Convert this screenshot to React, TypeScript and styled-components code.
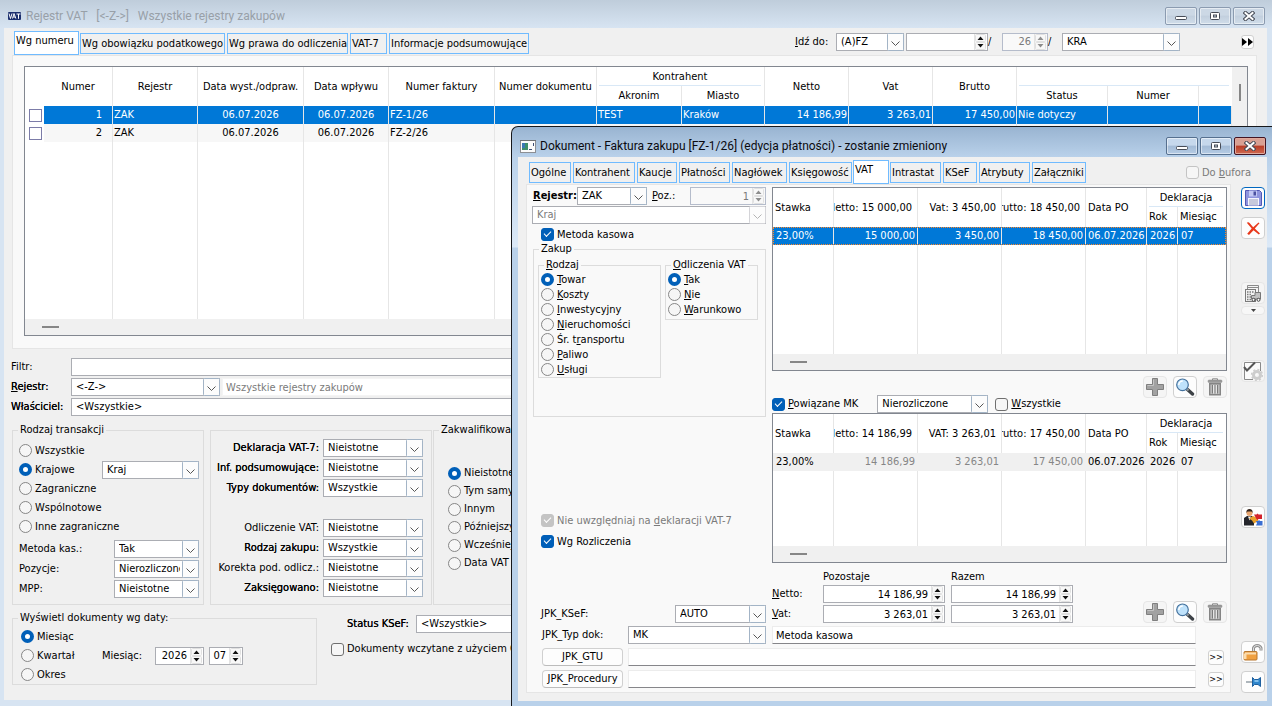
import React, { useId } from "react";
import styled, { createGlobalStyle, css } from "styled-components";

const uiFont = `"DejaVu Sans Condensed", "Noto Sans", "DejaVu Sans", sans-serif`;
const titleFont = `Roboto, "Noto Sans", sans-serif`;

const c = {
  face: "#f0f0f0",
  page: "#f9f9f9",
  line: "#dcdcdc",
  field: "#abadb3",
  list: "#828790",
  select: "#0078d7",
  accent: "#005fb8",
  tab: "#70bbff",
  muted: "#7a7a7a",
};

const GlobalStyle = createGlobalStyle`
  *, *::before, *::after { box-sizing: border-box; }
  body { margin: 0; background: #d7e4f2; overflow: hidden; }
  body, button, input, select { font: 11px/14px ${uiFont}; color: #000; }
  button, input, select { margin: 0; }
`;

/* ---------- windows ---------- */

const Desktop = styled.div`
  position: relative;
  display: flex;
  flex-direction: column;
  min-height: 100vh;
  padding-bottom: 6px;
  background: #d7e4f2;
  overflow: hidden;
`;

const MainBody = styled.main`
  flex: 1;
  margin: 0 5px 0 4px;
  padding-bottom: 15px;
  background: ${c.face};
`;

const Dialog = styled.section`
  position: absolute;
  top: 126px;
  left: 511px;
  right: 0;
  bottom: 0;
  display: flex;
  flex-direction: column;
  padding: 0 5px 5px 6px;
  border: solid #16181c;
  border-width: 1px 0 0 1px;
  border-radius: 7px 0 0 0;
  background: linear-gradient(#99b4d1 0, #b9d1ea 30px, #dce9f7 120px, #b9d1ea 121px);
`;

const TitleBar = styled.header<{ $dialog?: boolean }>`
  display: flex;
  align-items: center;
  gap: ${(p) => (p.$dialog ? 4 : 5)}px;
  height: ${(p) => (p.$dialog ? 30 : 28)}px;
  padding: ${(p) => (p.$dialog ? "8px 1px 0 2px" : "4px 7px 0 8px")};
  background: ${(p) => (p.$dialog ? "none" : "linear-gradient(#bfcddb, #d7e4f2)")};
`;

const Title = styled.h1<{ $dialog?: boolean }>`
  flex: 1;
  margin: 0;
  font: 400 12px/16px ${titleFont};
  color: ${(p) => (p.$dialog ? "#0b0b10" : "#98a0a8")};
  white-space: pre;
`;

const CaptionButtons = styled.div`
  display: flex;
  gap: 2px;
`;

const CaptionButton = styled.button<{ $tone: "plain" | "strong" | "close" }>`
  display: grid;
  place-items: center;
  width: 32px;
  height: 18px;
  padding: 0;
  border: 1px solid ${(p) => (p.$tone === "close" ? "#431422" : p.$tone === "strong" ? "#56708f" : "#8b9bb0")};
  border-radius: 2px;
  box-shadow: inset 0 0 0 1px ${(p) => (p.$tone === "close" ? "#e0a99c" : "#ffffff80")};
  background: ${(p) =>
    p.$tone === "close"
      ? "linear-gradient(#d9a093 45%, #b83c26 50%, #cf6a52)"
      : p.$tone === "strong"
      ? "linear-gradient(#c6d8ec 45%, #a3bbd6 50%, #b6cce5)"
      : "linear-gradient(#ccd8e5 45%, #c2cfde 50%, #d0ddea)"};
`;

const DialogBody = styled.div`
  flex: 1;
  display: flex;
  flex-direction: column;
  padding: 0 0 8px 8px;
  background: ${c.face};
`;

/* ---------- tabs ---------- */

const TabRow = styled.div<{ $main?: boolean }>`
  display: flex;
  align-items: flex-end;
  height: 27px;
  padding: ${(p) => (p.$main ? "0 13px 0 11px" : "0 16px 0 3px")};
`;

const Tabs = styled.div`
  display: flex;
  align-items: flex-end;
  gap: 2px;
`;

const Tab = styled.button<{ $w: number; $active?: boolean }>`
  width: ${(p) => p.$w}px;
  height: ${(p) => (p.$active ? 24 : 21)}px;
  margin: ${(p) => (p.$active ? "0 -1px" : "0 0 1px")};
  padding: 0 0 ${(p) => (p.$active ? 4 : 0)}px 1px;
  border: 1px solid ${c.tab};
  background: ${(p) => (p.$active ? "#fff" : c.face)};
  text-align: left;
  white-space: nowrap;
`;

/* ---------- fields ---------- */

const SelectBox = styled.span<{ $w?: number; $off?: boolean }>`
  position: relative;
  display: flex;
  flex: ${(p) => (p.$w ? "none" : "1")};
  width: ${(p) => (p.$w ? p.$w + "px" : "auto")};
  height: 18px;
  select {
    appearance: none;
    flex: 1;
    min-width: 0;
    padding: 0 18px 0 4px;
    border: 1px solid ${c.field};
    border-radius: 0;
    background: #fff;
    color: ${(p) => (p.$off ? c.muted : "#000")};
    opacity: 1;
  }
  svg {
    position: absolute;
    top: 0;
    right: 0;
    pointer-events: none;
  }
`;

const SpinBox = styled.span<{ $w: number; $off?: boolean }>`
  display: flex;
  align-items: center;
  width: ${(p) => p.$w}px;
  height: 18px;
  padding-right: 1px;
  border: 1px solid ${(p) => (p.$off ? "#b5bccb" : c.field)};
  background: ${(p) => (p.$off ? c.page : "#fff")};
  input {
    flex: 1;
    min-width: 0;
    height: 16px;
    padding: 0 3px;
    border: 0;
    border-right: 1px solid #e3e3e3;
    background: none;
    text-align: right;
    color: ${(p) => (p.$off ? c.muted : "#000")};
  }
`;

const TextInput = styled.input<{ $quiet?: boolean }>`
  flex: 1;
  min-width: 0;
  height: 18px;
  padding: 0 4px;
  border: 1px solid ${(p) => (p.$quiet ? "#ececec" : c.field)};
  border-bottom-color: ${(p) => (p.$quiet ? "#86868a" : c.field)};
  background: #fff;
`;

const TypeName = styled(TextInput)`
  grid-column: 3;
  margin: 0 12px 0 6px;
  padding: 0 3px;
`;

const WideInput = styled(TextInput)`
  grid-column: 2 / 4;
  margin-right: 12px;
`;

const RegisterName = styled(TextInput)`
  padding: 0 3px;
  border-color: #f4f4f4;
  color: ${c.muted};
`;

const Choice = styled.label<{ $h?: number; $off?: boolean }>`
  display: flex;
  align-items: center;
  gap: 3px;
  height: ${(p) => p.$h ?? 15}px;
  white-space: nowrap;
  color: ${(p) => (p.$off ? c.muted : "#000")};
`;

const mark = css`
  appearance: none;
  flex: none;
  width: 13px;
  height: 13px;
  background: #f6f6f6;
  border: 1px solid #868686;
`;

const RadioMark = styled.input`
  ${mark}
  border-radius: 50%;
  &:checked {
    border: 4px solid ${c.accent};
    background: #fff;
  }
`;

const CheckMark = styled.input`
  ${mark}
  display: grid;
  place-items: center;
  border-radius: 3px;
  border-color: #6f6f6f;
  &:checked {
    border-color: ${c.accent};
    background: ${c.accent};
  }
  &:disabled {
    border-color: #c4c4c4;
  }
  &:checked:disabled {
    background: #c4c4c4;
  }
  &:checked::after {
    content: "";
    width: 7px;
    height: 4px;
    margin-bottom: 3px;
    border: solid #fff;
    border-width: 0 0 1px 1px;
    transform: rotate(-45deg);
  }
`;

const RowMark = styled.input`
  ${mark}
  display: block;
  margin: 0 0 0 4px;
  border-color: #7c7ca8;
  background: #fff;
`;

const Caption = styled.label<{ $heavy?: boolean; $bold?: boolean; $w?: number; $right?: boolean }>`
  flex: none;
  width: ${(p) => (p.$w ? p.$w + "px" : "auto")};
  white-space: nowrap;
  text-align: ${(p) => (p.$right ? "right" : "left")};
  font-weight: ${(p) => (p.$bold ? 700 : 400)};
  text-shadow: ${(p) => (p.$heavy ? "0 0 0 #000" : "none")};
`;

const Group = styled.fieldset<{ $w?: number }>`
  flex: ${(p) => (p.$w ? "none" : "1")};
  width: ${(p) => (p.$w ? p.$w + "px" : "auto")};
  min-width: 0;
  margin: 0;
  padding: 0;
  border: 1px solid ${c.line};
  legend {
    margin-left: 5px;
    padding: 0 2px;
    white-space: nowrap;
  }
`;

const Stack = styled.div<{ $pad?: string; $gap?: number }>`
  display: flex;
  flex-direction: column;
  gap: ${(p) => p.$gap ?? 0}px;
  padding: ${(p) => p.$pad ?? "0"};
`;

const Line = styled.div<{ $h?: number; $between?: boolean; $gap?: number }>`
  display: flex;
  align-items: center;
  justify-content: ${(p) => (p.$between ? "space-between" : "flex-start")};
  gap: ${(p) => p.$gap ?? 0}px;
  height: ${(p) => p.$h ?? 18}px;
`;

const Gap = styled.span<{ $w: number }>`
  flex: none;
  width: ${(p) => p.$w}px;
`;

/* ---------- lists ---------- */

const MainPage = styled.div`
  margin: 0 10px 0 8px;
  padding: 10px 8px 12px 11px;
  border: 1px solid #e5e5e5;
  background: ${c.page};
`;

const ListFrame = styled.div`
  display: grid;
  grid-template-columns: minmax(0, 1fr) auto;
  border: 1px solid ${c.list};
  background: #fff;
`;

const VerticalBar = styled.div`
  width: 15px;
  padding: 17px 5px 0 7px;
  background: ${c.face};
  &::before {
    content: "";
    display: block;
    width: 2px;
    height: 17px;
    background: #868686;
  }
`;

const HorizontalBar = styled.div`
  grid-column: 1 / -1;
  height: 16px;
  padding: 7px 0 0 17px;
  background: ${c.face};
  &::before {
    content: "";
    display: block;
    width: 17px;
    height: 2px;
    background: #868686;
  }
`;

const DataTable = styled.table`
  width: 100%;
  table-layout: fixed;
  border-collapse: separate;
  border-spacing: 0;
  th,
  td {
    padding: 0;
    border-right: 1px solid #e6e6e6;
    font-weight: 400;
    white-space: nowrap;
    overflow: hidden;
  }
  th.bare,
  td.bare {
    border-right: 0;
  }
`;

const HeadRow = styled.tr<{ $h: number }>`
  height: ${(p) => p.$h}px;
`;

const GroupTitle = styled.div`
  height: 19px;
  margin: 0 3px 0 2px;
  padding-top: 3px;
  border-bottom: 1px solid #d9e8f6;
`;

const HeadClip = styled.div<{ $right?: boolean }>`
  display: flex;
  justify-content: ${(p) => (p.$right ? "flex-end" : "flex-start")};
  padding: ${(p) => (p.$right ? "0 5px 0 0" : "0 0 0 2px")};
  overflow: hidden;
  span {
    flex: none;
  }
`;

const BodyRow = styled.tr<{ $tone?: "selected" | "alt" | "grey"; $dotted?: boolean }>`
  height: 18px;
  color: ${(p) => (p.$tone === "selected" ? "#fff" : "#000")};
  outline: ${(p) => (p.$dotted ? "1px dotted #ff8728" : "none")};
  outline-offset: -1px;
  td {
    background: ${(p) =>
      p.$tone === "selected" ? c.select : p.$tone === "alt" ? "#f7f7f7" : p.$tone === "grey" ? "#f0f0f0" : "#fff"};
    border-right-color: ${(p) => (p.$tone === "grey" ? "#f0f0f0" : "#e6e6e6")};
  }
  td.bare {
    background: ${(p) => (p.$dotted ? c.select : p.$tone === "grey" ? "#f0f0f0" : "#fff")};
  }
`;

const Cell = styled.td<{ $align?: "left" | "right" | "center"; $inset?: number; $lead?: number; $dim?: boolean }>`
  && {
    padding: 0 ${(p) => p.$inset ?? 2}px 0 ${(p) => p.$lead ?? 1}px;
    text-align: ${(p) => p.$align ?? "left"};
    color: ${(p) => (p.$dim ? "#868686" : "inherit")};
  }
`;

const Filler = styled.tr<{ $h: number }>`
  height: ${(p) => p.$h}px;
`;

/* ---------- main window filters ---------- */

const GoTo = styled.div`
  display: flex;
  align-items: center;
  height: 24px;
  margin-left: auto;
  padding-bottom: 3px;
`;

const SkipButton = styled.button`
  display: grid;
  place-items: center;
  width: 13px;
  height: 14px;
  padding: 0;
  border: 1px solid #d0d0d0;
  border-radius: 3px;
  background: #fdfdfd;
`;

const FilterGrid = styled.div`
  display: grid;
  grid-template-columns: 60px minmax(0, 1fr);
  align-items: center;
  row-gap: 2px;
  margin: 9px 10px 0 7px;
`;

const GroupsRow = styled.div`
  display: flex;
  margin: 7px 10px 0 8px;
`;

const MatchGroup = styled(Group)`
  margin: 7px 1px 0 6px;
`;

const MatchGrid = styled.div`
  display: grid;
  grid-template-columns: 1fr 100px;
  grid-auto-rows: 20px;
  align-items: center;
  column-gap: 4px;
  padding: 7px 8px 0 0;
`;

const BlankRow = styled.span`
  grid-column: 1 / -1;
`;

const DateRow = styled.div`
  display: flex;
  margin: 6px 10px 0 8px;
`;

const DateBody = styled.div`
  display: flex;
  align-items: center;
  padding: 2px 0 0 8px;
`;

const DateKinds = styled.div`
  width: 81px;
`;

const KsefBlock = styled.div`
  flex: 1;
  display: flex;
  flex-direction: column;
  gap: 7px;
  padding: 4px 0 0 14px;
`;

/* ---------- dialog layout ---------- */

const BufferCheck = styled.div`
  height: 19px;
  margin-left: auto;
`;

const DialogContent = styled.div`
  flex: 1;
  display: flex;
  gap: 10px;
  padding-right: 2px;
`;

const VatPage = styled.div`
  flex: 1;
  min-width: 0;
  padding: 2px 3px 4px 5px;
  border: 1px solid #e5e5e5;
  background: ${c.page};
`;

const Columns = styled.div`
  display: grid;
  grid-template-columns: 234px minmax(0, 1fr);
  column-gap: 6px;
`;

const LeftColumn = styled.div`
  display: flex;
  flex-direction: column;
`;

const RegisterLine = styled(Line)`
  margin-bottom: 1px;
  padding-left: 1px;
`;

const CashLine = styled.div`
  padding: 3px 0 0 9px;
`;

const PurchaseGroup = styled(Group)`
  flex: none;
  height: 175px;
  margin-left: 1px;
`;

const PurchaseBody = styled.div`
  display: flex;
  align-items: flex-start;
  gap: 4px;
  padding: 2px 0 0 4px;
`;

const SettleChecks = styled.div`
  display: grid;
  gap: 6px;
  margin-top: 96px;
  padding-left: 9px;
`;

const KsefLine = styled(Line)`
  margin-top: auto;
  padding-left: 9px;
`;

const RelatedBar = styled.div`
  display: flex;
  align-items: flex-end;
  height: 42px;
`;

const Tools = styled.div<{ $top?: boolean }>`
  display: flex;
  gap: 6px;
  align-self: ${(p) => (p.$top ? "flex-start" : "flex-end")};
  margin: ${(p) => (p.$top ? 5 : 0)}px 0 0 auto;
`;

const IconButton = styled.button<{ $focus?: boolean; $flat?: boolean }>`
  display: grid;
  place-items: center;
  width: 24px;
  height: 22px;
  padding: 0;
  border: 1px solid ${(p) => (p.$focus ? "#0067c0" : p.$flat ? "#e6e6e6" : "#d0d0d0")};
  border-radius: 4px;
  background: ${(p) => (p.$flat ? "#f5f5f5" : "#fdfdfd")};
`;

const Totals = styled.div`
  display: flex;
  padding-top: 7px;
`;

const TotalsGrid = styled.div`
  display: grid;
  grid-template-columns: 45px 122px 122px;
  grid-template-rows: 13px 18px 18px;
  align-items: center;
  column-gap: 6px;
  row-gap: 2px;
`;

const JpkRows = styled.div`
  display: grid;
  grid-template-columns: 86px 138px minmax(0, 1fr) 16px;
  gap: 4px 0;
  align-items: center;
  margin-top: 3px;
  padding: 0 3px 0 10px;
`;

const PushButton = styled.button`
  width: 81px;
  height: 18px;
  padding: 0;
  border: 1px solid #d0d0d0;
  border-bottom-color: #bcbcbc;
  border-radius: 4px;
  background: #fdfdfd;
  white-space: nowrap;
`;

const MoreButton = styled.button`
  display: flex;
  align-items: center;
  justify-content: center;
  width: 16px;
  height: 15px;
  padding: 0;
  border: 1px solid #d0d0d0;
  border-radius: 3px;
  background: #fdfdfd;
  font-size: 9px;
`;

const SideTools = styled.div`
  display: flex;
  flex-direction: column;
  width: 24px;
  padding-top: 3px;
`;

const SideSlot = styled.div<{ $top: number | "auto" }>`
  display: flex;
  margin-top: ${(p) => (p.$top === "auto" ? "auto" : p.$top + "px")};
`;

const DropButton = styled.button`
  display: grid;
  place-items: center;
  width: 24px;
  height: 9px;
  padding: 0;
  border: 1px solid #e6e6e6;
  border-radius: 4px;
  background: #f7f7f7;
`;

/* ---------- icons ---------- */

const VatLogo = () => (
  <svg width="13" height="10" viewBox="0 0 13 10" aria-hidden>
    <rect y="1" width="13" height="8" rx="1" fill="#1c2f6e" />
    <path d="M1 2.500l1.500 5L4 2.500M4.500 7.500L6 2.500l1.800 5M5.200 6h2M8.500 3H12.500M10.500 3v4.800" stroke="#fff" strokeWidth="1" fill="none" />
  </svg>
);

const DocIcon = () => (
  <svg width="16" height="13" viewBox="0 0 16 13" aria-hidden>
    <rect x=".5" y=".5" width="15" height="12" fill="#fbfbfb" stroke="#8c8f94" />
    <path d="M0 .5h16" stroke="#6f7276" strokeWidth="1" />
    <rect x="2" y="3" width="6" height="7" fill="#3f8f6b" />
    <rect x="2" y="3" width="3" height="5" fill="#3b79b5" />
    <path d="M9 9.500h3M13.500 3v3" stroke="#3c4d75" />
  </svg>
);

const MinGlyph = () => (
  <svg width="12" height="10" viewBox="0 0 12 10" aria-hidden>
    <rect x=".5" y="5.500" width="11" height="3" rx="1" fill="#fff" stroke="#474c57" />
  </svg>
);
const MaxGlyph = () => (
  <svg width="12" height="10" viewBox="0 0 12 10" aria-hidden>
    <rect x="1.500" y="1.500" width="9" height="7" rx="1" fill="#fff" stroke="#474c57" />
    <rect x="4.500" y="4" width="3" height="2" fill="#c6d3e2" stroke="#474c57" />
  </svg>
);
const CloseGlyph = () => (
  <svg width="12" height="10" viewBox="0 0 12 10" aria-hidden>
    <path d="M2.500 2l7 6M9.500 2l-7 6" stroke="#474c57" strokeWidth="4" strokeLinecap="square" />
    <path d="M2.500 2l7 6M9.500 2l-7 6" stroke="#fff" strokeWidth="2" strokeLinecap="square" />
  </svg>
);

const DropArrow = ({ off }: { off?: boolean }) => (
  <svg width="17" height="18" viewBox="0 0 17 18" aria-hidden>
    <rect x=".5" y=".5" width="16" height="17" rx="1" fill="#fcfcfc" stroke={off ? "#d4d4d8" : "#a3b4c6"} />
    <path d="M4.500 8.500l4 4 4-4" fill="none" stroke={off ? "#b4b4b4" : "#555"} />
  </svg>
);

const SpinArrows = ({ off }: { off?: boolean }) => (
  <svg width="11" height="16" viewBox="0 0 11 16" aria-hidden>
    <rect x=".5" y=".5" width="10" height="7" rx="1" fill="#f8f8f8" stroke="#e0e0e0" />
    <rect x=".5" y="8.500" width="10" height="7" rx="1" fill="#f8f8f8" stroke="#e0e0e0" />
    <path d="M2.500 6h6l-3-3.500zM2.500 10h6l-3 3.500z" fill={off ? "#8d8d8d" : "#111"} />
  </svg>
);

const SkipIcon = () => (
  <svg width="11" height="8" viewBox="0 0 11 8" aria-hidden>
    <path d="M0 0l5 4-5 4zM6 0l5 4-5 4z" fill="#000" />
  </svg>
);

const PlusIcon = () => (
  <svg width="18" height="18" viewBox="0 0 18 18" aria-hidden>
    <path d="M6.500 .5h5v6h6v5h-6v6h-5v-6h-6v-5h6z" fill="#a2a2a2" stroke="#7f7f7f" />
    <path d="M7.500 1.500v6h-6" stroke="#c4c4c4" fill="none" />
  </svg>
);

const LensIcon = () => (
  <svg width="20" height="18" viewBox="0 0 20 18" aria-hidden>
    <path d="M12.500 11.500l5 4.500" stroke="#3d4247" strokeWidth="3.400" strokeLinecap="round" />
    <path d="M11.500 10.500l2 2" stroke="#8f979e" strokeWidth="2" />
    <circle cx="7.500" cy="6.800" r="5.800" fill="#bfe2fb" stroke="#44719d" strokeWidth="1.200" />
    <path d="M3.800 7a4 4 0 0 1 4-4" stroke="#fff" strokeWidth="1.500" fill="none" />
  </svg>
);

const BinIcon = () => (
  <svg width="16" height="18" viewBox="0 0 16 18" aria-hidden>
    <path d="M5.500 2V.8h5V2" stroke="#8b8b8b" fill="none" />
    <rect x="1" y="2" width="14" height="2.500" rx="1" fill="#9a9a9a" stroke="#858585" strokeWidth=".5" />
    <path d="M2.700 5.700h10.600V16.800H2.700z" fill="#c2c2c2" stroke="#858585" strokeWidth="1.400" />
    <path d="M5.500 7v8.500M8 7v8.500M10.500 7v8.500" stroke="#7c7c7c" strokeWidth="1.200" />
    <path d="M6.700 7v8.500M9.300 7v8.500" stroke="#f0f0f0" strokeWidth="1" />
  </svg>
);

const SaveIcon = () => (
  <svg width="17" height="18" viewBox="0 0 17 18" aria-hidden>
    <path d="M.5 1.500h14l2 2v13H.5z" fill="#8f95de" stroke="#5358b4" />
    <rect x="4" y="1.500" width="8" height="6" fill="#c3c8f4" />
    <rect x="8.500" y="2.500" width="2.500" height="4" fill="#4a50a0" />
    <rect x="3" y="9" width="11" height="7.500" fill="#f4f5ff" />
    <path d="M4 11h9M4 13h9M4 15h9" stroke="#9a9db8" />
  </svg>
);

const DeleteIcon = () => (
  <svg width="15" height="15" viewBox="0 0 15 15" aria-hidden>
    <path d="M.8 1.800C1.800 .8 3 1.200 4 2.500L7.200 6.200 12.500 1.500 13.500 2.200 8.800 7.600 14 12.500 12.800 13.600 7.500 9.300 3 14 1.200 12.800 5.700 7.500z" fill="#e8381b" />
  </svg>
);

const StockIcon = () => (
  <svg width="16" height="17" viewBox="0 0 16 17" aria-hidden>
    <path d="M2.500 4.500V.5h11V8M2.500 2.500h11" stroke="#8b8b8b" fill="none" />
    <rect x=".5" y="4.500" width="10" height="12" fill="#f3f3f3" stroke="#7b7b7b" />
    <path d="M2 7h7M2 9.500h5M2 12h4M2 14.500h4" stroke="#7b7b7b" strokeWidth="1.300" strokeDasharray="1.500 1" />
    <path d="M10 7.500h5.500v6.500h-9v-3.500H10z" fill="#c2c2c2" stroke="#777" />
    <circle cx="8.500" cy="14.800" r="1.500" fill="#fff" stroke="#444" />
    <circle cx="13.500" cy="14.800" r="1.500" fill="#fff" stroke="#444" />
  </svg>
);

const VerifyIcon = () => (
  <svg width="20" height="20" viewBox="0 0 20 20" aria-hidden>
    <path d="M17.500 10V1.500H1.500v17H10" stroke="#8a8a8a" fill="#fbfbfb" />
    <path d="M1 6l3 3.500L12 1.500" stroke="#555" strokeWidth="2" fill="none" />
    <circle cx="14" cy="14" r="3.500" fill="none" stroke="#cdcdcd" strokeWidth="3" />
    <circle cx="14" cy="14" r="5.400" fill="none" stroke="#cdcdcd" strokeWidth="1.500" strokeDasharray="2 2.200" />
  </svg>
);

const MiniDrop = () => (
  <svg width="5" height="3" viewBox="0 0 5 3" aria-hidden>
    <path d="M0 0h5L2.500 3z" fill="#444" />
  </svg>
);

const PersonIcon = () => (
  <svg width="19" height="17" viewBox="0 0 19 17" aria-hidden>
    <path d="M0 16.500V9l3-2h5l2 2v7.500z" fill="#23242a" />
    <path d="M4 7.500l1.500 4L7 7.500z" fill="#f4f4f4" />
    <circle cx="5.500" cy="4" r="3" fill="#e9a56e" />
    <path d="M2.500 4C2 1 3.500 0 5.500 0s3.500 1 3 4L7.500 2.500h-4z" fill="#33241c" />
    <path d="M5 9.500l4-2.500 5 2v3l-4 2.500-2-3z" fill="#e9a02c" />
    <path d="M10 5.500h2.500l1-1 1 1H18v4.500h-3.500l-1 1-1-1z" fill="#d3222a" />
    <path d="M12 12h2l1-1 1 1h2.500v4.500H12l1-2.200z" fill="#3a6ed1" />
  </svg>
);

const LockIcon = () => (
  <svg width="20" height="18" viewBox="0 0 20 18" aria-hidden>
    <path d="M10.500 8.500V5a4 4 0 0 1 7.500 0v2.500" stroke="#8f8f8f" strokeWidth="3" fill="none" />
    <path d="M10.500 8.500V5a4 4 0 0 1 7.500 0v2.500" stroke="#dedede" strokeWidth="1" fill="none" />
    <rect x="1" y="8.500" width="13" height="8.500" rx="1" fill="#f0a040" stroke="#b8772f" />
    <path d="M2 10.500h11" stroke="#fbdcae" strokeWidth="2" />
    <path d="M2 10.500v5.500" stroke="#fbdcae" strokeWidth="3" />
  </svg>
);

const PinIcon = () => (
  <svg width="17" height="12" viewBox="0 0 17 12" aria-hidden>
    <path d="M1 6h7" stroke="#8c979f" strokeWidth="1.400" />
    <path d="M7.500 1.500l2 2h3.500l2.500-2v9l-2.500-2H9.500l-2 2z" fill="#2f86cc" stroke="#1e5f9e" />
    <path d="M9.500 5h4" stroke="#9bd0f7" strokeWidth="1.500" />
  </svg>
);

/* ---------- small composites ---------- */

/** Splits "Re&jestr" into text with its access key underlined. */
const Access = ({ text }: { text: string }) => {
  const at = text.indexOf("&");
  if (at < 0) return <span>{text}</span>;
  return (
    <span>
      {text.slice(0, at)}
      <u>{text[at + 1]}</u>
      {text.slice(at + 2)}
    </span>
  );
};

const Dropdown = ({ value, w, off, id, name }: { value: string; w?: number; off?: boolean; id?: string; name?: string }) => (
  <SelectBox $w={w} $off={off}>
    <select id={id} aria-label={id ? undefined : name} disabled={off} defaultValue={value}>
      <option>{value}</option>
    </select>
    <DropArrow off={off} />
  </SelectBox>
);

const Spin = ({ value, w, off, name, id }: { value: string; w: number; off?: boolean; name?: string; id?: string }) => (
  <SpinBox $w={w} $off={off}>
    <input id={id} aria-label={name} defaultValue={value} disabled={off} />
    <SpinArrows off={off} />
  </SpinBox>
);

const Radio = ({ text, group, on, h }: { text: string; group: string; on?: boolean; h?: number }) => (
  <Choice $h={h}>
    <RadioMark type="radio" name={group} defaultChecked={on} />
    <Access text={text} />
  </Choice>
);

const Check = ({ text, on, off, h }: { text: string; on?: boolean; off?: boolean; h?: number }) => (
  <Choice $h={h} $off={off}>
    <CheckMark type="checkbox" defaultChecked={on} disabled={off} />
    <Access text={text} />
  </Choice>
);

const LabeledSelect = ({ label, value, w }: { label: string; value: string; w: number }) => {
  const id = useId();
  return (
    <Line $h={20} $between>
      <Caption htmlFor={id}>{label}</Caption>
      <Dropdown id={id} value={value} w={w} />
    </Line>
  );
};

const Match = ({ label, value, heavy }: { label: string; value: string; heavy?: boolean }) => {
  const id = useId();
  return (
    <>
      <Caption htmlFor={id} $heavy={heavy} $right>
        {label}
      </Caption>
      <Dropdown id={id} value={value} w={100} />
    </>
  );
};

const WindowButtons = ({ dialog }: { dialog?: boolean }) => (
  <CaptionButtons>
    <CaptionButton $tone={dialog ? "strong" : "plain"} aria-label="Minimalizuj">
      <MinGlyph />
    </CaptionButton>
    <CaptionButton $tone={dialog ? "strong" : "plain"} aria-label="Maksymalizuj">
      <MaxGlyph />
    </CaptionButton>
    <CaptionButton $tone={dialog ? "close" : "plain"} aria-label="Zamknij">
      <CloseGlyph />
    </CaptionButton>
  </CaptionButtons>
);

const EditTools = ({ top }: { top?: boolean }) => (
  <Tools $top={top}>
    <IconButton $flat aria-label="Dodaj"><PlusIcon /></IconButton>
    <IconButton aria-label="Podgląd"><LensIcon /></IconButton>
    <IconButton $flat aria-label="Usuń"><BinIcon /></IconButton>
  </Tools>
);

/* ---------- register list ---------- */

const registerCols = [19, 69, 85, 106, 85, 106, 102, 85, 83, 84, 84, 84, 91, 91];
const registerRows = [
  ["1", "ZAK", "06.07.2026", "06.07.2026", "FZ-1/26", "", "TEST", "Kraków", "14 186,99", "3 263,01", "17 450,00", "Nie dotyczy", "", ""],
  ["2", "ZAK", "06.07.2026", "06.07.2026", "FZ-2/26", "", "", "", "", "", "", "", "", ""],
];
const registerAlign = ["right", "left", "center", "center", "left", "left", "left", "left", "right", "right", "right", "left", "left", "left"] as const;

const RegisterList = () => (
  <ListFrame>
    <DataTable>
      <colgroup>
        {registerCols.map((w, i) => (
          <col key={i} width={w} />
        ))}
        <col />
      </colgroup>
      <thead>
        <HeadRow $h={19}>
          <th rowSpan={2} className="bare" />
          {["Numer", "Rejestr", "Data wyst./odpraw.", "Data wpływu", "Numer faktury", "Numer dokumentu"].map((t) => (
            <th key={t} rowSpan={2}>{t}</th>
          ))}
          <th colSpan={2}><GroupTitle>Kontrahent</GroupTitle></th>
          {["Netto", "Vat", "Brutto"].map((t) => (
            <th key={t} rowSpan={2}>{t}</th>
          ))}
          <th colSpan={3} className="bare"><GroupTitle /></th>
        </HeadRow>
        <HeadRow $h={20}>
          <th>Akronim</th>
          <th>Miasto</th>
          <th>Status</th>
          <th>Numer</th>
          <th className="bare" />
        </HeadRow>
      </thead>
      <tbody>
        {registerRows.map((row, r) => (
          <BodyRow key={r} $tone={r === 0 ? "selected" : "alt"}>
            <td className="bare">
              <RowMark type="checkbox" aria-label={`Zaznacz pozycję ${row[0]}`} />
            </td>
            {row.map((v, i) => (
              <Cell key={i} $align={registerAlign[i]} $inset={i === 0 ? 10 : 1}>{v}</Cell>
            ))}
          </BodyRow>
        ))}
        <Filler $h={177}>
          <td className="bare" />
          {registerRows[0].map((_, i) => (
            <td key={i} className={i === 13 ? "bare" : undefined} />
          ))}
        </Filler>
      </tbody>
    </DataTable>
    <VerticalBar />
    <HorizontalBar />
  </ListFrame>
);

/* ---------- VAT lists in the dialog ---------- */

type VatListProps = {
  heads: [string, string, string];
  values: [string, string, string];
  selected?: boolean;
  rest: number;
};

const VatList = ({ heads, values, selected, rest }: VatListProps) => (
  <ListFrame>
    <DataTable>
      <colgroup>
        {[61, 84, 84, 84, 61, 31].map((w, i) => (
          <col key={i} width={w} />
        ))}
        <col />
      </colgroup>
      <thead>
        <HeadRow $h={19}>
          <th rowSpan={2}><HeadClip><span>Stawka</span></HeadClip></th>
          {heads.map((t) => (
            <th key={t} rowSpan={2}><HeadClip $right><span>{t}</span></HeadClip></th>
          ))}
          <th rowSpan={2}><HeadClip><span>Data PO</span></HeadClip></th>
          <th colSpan={2} className="bare"><GroupTitle>Deklaracja</GroupTitle></th>
        </HeadRow>
        <HeadRow $h={20}>
          <th><HeadClip><span>Rok</span></HeadClip></th>
          <th className="bare"><HeadClip><span>Miesiąc</span></HeadClip></th>
        </HeadRow>
      </thead>
      <tbody>
        <BodyRow $tone={selected ? "selected" : "grey"} $dotted={selected}>
          <Cell $lead={3}>23,00%</Cell>
          {values.map((v) => (
            <Cell key={v} $align="right" $dim={!selected}>{v}</Cell>
          ))}
          <Cell $lead={2} $inset={0}>06.07.2026</Cell>
          <Cell $lead={3} $inset={0}>2026</Cell>
          <Cell $lead={3} className="bare">07</Cell>
        </BodyRow>
        <Filler $h={rest}>
          {[0, 1, 2, 3, 4, 5].map((i) => (
            <td key={i} />
          ))}
          <td className="bare" />
        </Filler>
      </tbody>
    </DataTable>
    <HorizontalBar />
  </ListFrame>
);

/* ---------- dialog ---------- */

const dialogTabs: [string, number][] = [
  ["Ogólne", 42], ["Kontrahent", 62], ["Kaucje", 40], ["Płatności", 51], ["Nagłówek", 55], ["Księgowość", 63],
  ["VAT", 36], ["Intrastat", 51], ["KSeF", 34], ["Atrybuty", 51], ["Załączniki", 54],
];

const DocumentDialog = () => (
  <Dialog role="dialog" aria-label="Dokument - Faktura zakupu">
    <TitleBar $dialog>
      <DocIcon />
      <Title as="h2" $dialog>Dokument - Faktura zakupu [FZ-1/26] (edycja płatności) - zostanie zmieniony</Title>
      <WindowButtons dialog />
    </TitleBar>
    <DialogBody>
      <TabRow>
        <Tabs role="tablist">
          {dialogTabs.map(([t, w]) => (
            <Tab key={t} role="tab" $w={w} $active={t === "VAT"}>{t}</Tab>
          ))}
        </Tabs>
        <BufferCheck>
          <Check text="Do &bufora" off />
        </BufferCheck>
      </TabRow>
      <DialogContent>
        <VatPage>
          <Columns>
            <LeftColumn>
              <RegisterLine>
                <Caption htmlFor="dlg-rej" $bold $w={44}><Access text="&Rejestr:" /></Caption>
                <Dropdown id="dlg-rej" value="ZAK" w={70} />
                <Gap $w={5} />
                <Caption htmlFor="dlg-poz" $w={38}><Access text="&Poz.:" /></Caption>
                <Spin id="dlg-poz" value="1" w={76} off />
              </RegisterLine>
              <Line>
                <Dropdown name="Kraj" value="Kraj" off />
              </Line>
              <CashLine>
                <Check text="Metoda kasowa" on />
              </CashLine>
              <PurchaseGroup>
                <legend>Zakup</legend>
                <PurchaseBody>
                  <Group $w={123}>
                    <legend><Access text="&Rodzaj" /></legend>
                    <Stack $pad="0 0 0 2px">
                      {["&Towar", "&Koszty", "&Inwestycyjny", "&Nieruchomości", "Śr. t&ransportu", "&Paliwo", "&Usługi"].map((t, i) => (
                        <Radio key={t} group="kind" text={t} on={i === 0} />
                      ))}
                    </Stack>
                  </Group>
                  <Group $w={93}>
                    <legend><Access text="&Odliczenia VAT" /></legend>
                    <Stack $pad="0 0 2px 2px">
                      {["&Tak", "&Nie", "&Warunkowo"].map((t, i) => (
                        <Radio key={t} group="deduct" text={t} on={i === 0} />
                      ))}
                    </Stack>
                  </Group>
                </PurchaseBody>
              </PurchaseGroup>
              <SettleChecks>
                <Check text="Nie uwzględniaj na &deklaracji VAT-7" on off />
                <Check text="Wg Rozliczenia" on />
              </SettleChecks>
              <KsefLine $between>
                <Caption htmlFor="jpk-ksef">JPK_KSeF:</Caption>
                <Dropdown id="jpk-ksef" value="AUTO" w={91} />
              </KsefLine>
            </LeftColumn>
            <div>
              <VatList
                selected
                heads={["Netto: 15 000,00", "Vat: 3 450,00", "Brutto: 18 450,00"]}
                values={["15 000,00", "3 450,00", "18 450,00"]}
                rest={109}
              />
              <RelatedBar>
                <Check text="&Powiązane MK" on h={18} />
                <Gap $w={19} />
                <Dropdown name="Rozliczenie" value="Nierozliczone" w={111} />
                <Gap $w={7} />
                <Check text="&Wszystkie" h={18} />
                <EditTools top />
              </RelatedBar>
              <VatList
                heads={["Netto: 14 186,99", "VAT: 3 263,01", "Brutto: 17 450,00"]}
                values={["14 186,99", "3 263,01", "17 450,00"]}
                rest={75}
              />
              <Totals>
                <TotalsGrid>
                  <span />
                  <span>Pozostaje</span>
                  <span>Razem</span>
                  <Access text="&Netto:" />
                  <Spin name="Netto pozostaje" value="14 186,99" w={122} />
                  <Spin name="Netto razem" value="14 186,99" w={122} />
                  <Access text="&Vat:" />
                  <Spin name="Vat pozostaje" value="3 263,01" w={122} />
                  <Spin name="Vat razem" value="3 263,01" w={122} />
                </TotalsGrid>
                <EditTools />
              </Totals>
            </div>
          </Columns>
          <JpkRows>
            <Caption htmlFor="jpk-typ">JPK_Typ dok:</Caption>
            <Dropdown id="jpk-typ" value="MK" w={138} />
            <TypeName $quiet defaultValue="Metoda kasowa" aria-label="Nazwa typu dokumentu" />
            <span />
            <PushButton>JPK_GTU</PushButton>
            <WideInput $quiet aria-label="JPK_GTU" />
            <MoreButton aria-label="Wybierz GTU">&gt;&gt;</MoreButton>
            <PushButton>JPK_Procedury</PushButton>
            <WideInput $quiet aria-label="JPK_Procedury" />
            <MoreButton aria-label="Wybierz procedury">&gt;&gt;</MoreButton>
          </JpkRows>
        </VatPage>
        <SideTools>
          <SideSlot $top={0}><IconButton $focus aria-label="Zapisz"><SaveIcon /></IconButton></SideSlot>
          <SideSlot $top={8}><IconButton aria-label="Anuluj"><DeleteIcon /></IconButton></SideSlot>
          <SideSlot $top={43}><IconButton $flat aria-label="Magazyn"><StockIcon /></IconButton></SideSlot>
          <SideSlot $top={2}><DropButton aria-label="Więcej"><MiniDrop /></DropButton></SideSlot>
          <SideSlot $top={45}><IconButton $flat aria-label="Weryfikacja"><VerifyIcon /></IconButton></SideSlot>
          <SideSlot $top={124}><IconButton aria-label="Opiekun"><PersonIcon /></IconButton></SideSlot>
          <SideSlot $top="auto"><IconButton aria-label="Odblokuj"><LockIcon /></IconButton></SideSlot>
          <SideSlot $top={8}><IconButton aria-label="Przypnij"><PinIcon /></IconButton></SideSlot>
        </SideTools>
      </DialogContent>
    </DialogBody>
  </Dialog>
);

/* ---------- page ---------- */

const mainTabs: [string, number][] = [
  ["Wg numeru", 65], ["Wg obowiązku podatkowego", 145], ["Wg prawa do odliczenia", 121], ["VAT-7", 37], ["Informacje podsumowujące", 140],
];

export default function App() {
  return (
    <Desktop>
      <GlobalStyle />
      <TitleBar>
        <VatLogo />
        <Title>{"Rejestr VAT   [<-Z->]   Wszystkie rejestry zakupów"}</Title>
        <WindowButtons />
      </TitleBar>
      <MainBody>
        <TabRow $main>
          <Tabs role="tablist">
            {mainTabs.map(([t, w], i) => (
              <Tab key={t} role="tab" $w={w} $active={i === 0}>{t}</Tab>
            ))}
          </Tabs>
          <GoTo>
            <Caption htmlFor="goto" $w={41}><Access text="&Idź do:" /></Caption>
            <Dropdown id="goto" value="(A)FZ" w={68} />
            <Gap $w={2} />
            <Spin name="Numer" value="" w={82} />
            <Caption as="span" $w={14}>/</Caption>
            <Spin name="Rok" value="26" w={46} off />
            <Caption as="span" $w={14}>/</Caption>
            <Dropdown name="Seria" value="KRA" w={118} />
            <Gap $w={61} />
            <SkipButton aria-label="Dalej"><SkipIcon /></SkipButton>
          </GoTo>
        </TabRow>
        <MainPage>
          <RegisterList />
        </MainPage>
        <FilterGrid>
          <Caption htmlFor="f-filter">Filtr:</Caption>
          <TextInput id="f-filter" />
          <Caption htmlFor="f-reg" $heavy><Access text="&Rejestr:" /></Caption>
          <Line $gap={2}>
            <Dropdown id="f-reg" value="<-Z->" w={149} />
            <RegisterName aria-label="Nazwa rejestru" readOnly defaultValue="Wszystkie rejestry zakupów" />
          </Line>
          <Caption htmlFor="f-own" $heavy>Właściciel:</Caption>
          <Dropdown id="f-own" value="<Wszystkie>" />
        </FilterGrid>
        <GroupsRow>
          <Group $w={192}>
            <legend>Rodzaj transakcji</legend>
            <Stack $pad="4px 4px 5px 6px" $gap={3}>
              <div>
                <Radio group="tx" text="Wszystkie" h={19} />
                <Line $h={19} $between>
                  <Radio group="tx" text="Krajowe" on />
                  <Dropdown name="Kraj transakcji" value="Kraj" w={97} />
                </Line>
                <Radio group="tx" text="Zagraniczne" h={19} />
                <Radio group="tx" text="Wspólnotowe" h={19} />
                <Radio group="tx" text="Inne zagraniczne" h={19} />
              </div>
              <div>
                <LabeledSelect label="Metoda kas.:" value="Tak" w={85} />
                <LabeledSelect label="Pozycje:" value="Nierozliczone" w={85} />
                <LabeledSelect label="MPP:" value="Nieistotne" w={85} />
              </div>
            </Stack>
          </Group>
          <MatchGroup $w={222}>
            <MatchGrid>
              <Match heavy label="Deklaracja VAT-7:" value="Nieistotne" />
              <Match heavy label="Inf. podsumowujące:" value="Nieistotne" />
              <Match heavy label="Typy dokumentów:" value="Wszystkie" />
              <BlankRow />
              <Match label="Odliczenie VAT:" value="Nieistotne" />
              <Match heavy label="Rodzaj zakupu:" value="Wszystkie" />
              <Match label="Korekta pod. odlicz.:" value="Nieistotne" />
              <Match heavy label="Zaksięgowano:" value="Nieistotne" />
            </MatchGrid>
          </MatchGroup>
          <Group>
            <legend>Zakwalifikowane</legend>
            <Stack $pad="27px 0 0 14px">
              {["Nieistotne", "Tym samym", "Innym", "Późniejszym", "Wcześniejszym", "Data VAT"].map((t, i) => (
                <Radio key={t} group="period" text={t} on={i === 0} h={18} />
              ))}
            </Stack>
          </Group>
        </GroupsRow>
        <DateRow>
          <Group $w={305}>
            <legend>Wyświetl dokumenty wg daty:</legend>
            <DateBody>
              <DateKinds>
                <Radio group="date" text="Miesiąc" on h={19} />
                <Radio group="date" text="Kwartał" h={19} />
                <Radio group="date" text="Okres" h={19} />
              </DateKinds>
              <Caption as="span" $w={53}>Miesiąc:</Caption>
              <Spin name="Rok dokumentów" value="2026" w={49} />
              <Gap $w={5} />
              <Spin name="Miesiąc dokumentów" value="07" w={34} />
            </DateBody>
          </Group>
          <KsefBlock>
            <Line>
              <Gap $w={16} />
              <Caption htmlFor="ksef" $heavy $w={69}>Status KSeF:</Caption>
              <Dropdown id="ksef" value="<Wszystkie>" />
            </Line>
            <Check text="Dokumenty wczytane z użyciem OCR" h={18} />
          </KsefBlock>
        </DateRow>
      </MainBody>
      <DocumentDialog />
    </Desktop>
  );
}
